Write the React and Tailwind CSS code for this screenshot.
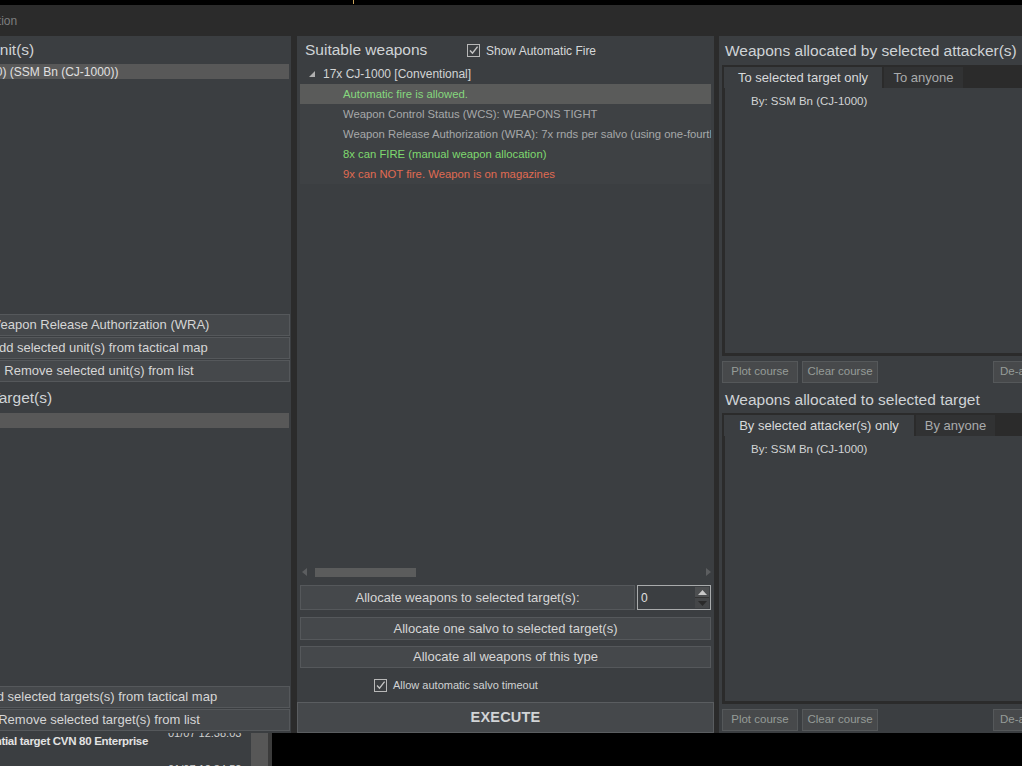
import React from 'react'

const font = "font-['Liberation_Sans','Noto_Sans',sans-serif]"

function Check({ small }) {
  return (
    <span className="w-[13px] h-[13px] border border-[#b8b8b8] bg-[#3b3e41] flex items-center justify-center shrink-0">
      <svg width="11" height="11" viewBox="0 0 11 11">
        <path d="M2 5.5 L4.5 8.2 L9.6 1.6" fill="none" stroke="#c4c4c4" strokeWidth={small ? 1.3 : 1.5} />
      </svg>
    </span>
  )
}

function Btn({ children, className = '' }) {
  return (
    <div className={`flex items-center justify-center bg-[#45484b] border border-[#55585b] text-[#d6d6d6] text-[13px] whitespace-nowrap shrink-0 ${className}`}>
      {children}
    </div>
  )
}

function SmallBtn({ children, className = '' }) {
  return (
    <div className={`h-[22px] flex items-center justify-center bg-[#47494b] border border-[#55585a] text-[#969c98] text-[11.5px] whitespace-nowrap ${className}`}>
      {children}
    </div>
  )
}

function TabBox({ tabs }) {
  return (
    <div className="flex-1 flex flex-col ml-[3px]">
      <div className="h-[23px] bg-[#2b2b2b] flex items-end pl-[2px] gap-[2px]">
        <div className={`h-[21px] ${tabs[0].w} bg-[#3b3e41] flex items-center justify-center text-[13px] text-[#d8dadb]`}>{tabs[0].label}</div>
        <div className={`h-[21px] ${tabs[1].w} bg-[#313233] flex items-center justify-center text-[13px] text-[#a9abac]`}>{tabs[1].label}</div>
      </div>
      <div className="flex-1 bg-[#3b3e41] border-l-[3px] border-b-[3px] border-[#2b2b2b] pl-[26px] pt-[5px] text-[11.5px] text-[#d2d4d5]">
        By: SSM Bn (CJ-1000)
      </div>
    </div>
  )
}

const rows = [
  { t: 'Automatic fire is allowed.', c: 'text-[#86d77e]', sel: true },
  { t: 'Weapon Control Status (WCS): WEAPONS TIGHT', c: 'text-[#a6a8a9]' },
  { t: 'Weapon Release Authorization (WRA): 7x rnds per salvo (using one-fourth of the salvo)', c: 'text-[#a6a8a9]' },
  { t: '8x can FIRE (manual weapon allocation)', c: 'text-[#7fd86f]' },
  { t: '9x can NOT fire. Weapon is on magazines', c: 'text-[#e06b52]' },
]

export default function App() {
  return (
    <div className={`w-[1022px] h-[766px] bg-black overflow-hidden flex flex-col ${font}`}>
      <div className="h-[5px] shrink-0 bg-black relative">
        <span className="absolute left-[353px] top-0 w-[1px] h-[4px] bg-[#c9a25a]" />
      </div>
      <div className="h-[31px] shrink-0 bg-[#2b2b2b] flex items-center text-[12px] text-[#7d7e7f] overflow-hidden">
        <span className="ml-[-82px] whitespace-nowrap">Weapon Allocation</span>
      </div>

      <div className="h-[697px] shrink-0 flex bg-[#2b2b2b]">
        {/* left panel */}
        <div className="w-[291px] overflow-hidden bg-[#3b3e41]">
          <div className="w-[383px] ml-[-92px] h-full flex flex-col">
            <div className="h-[28px] flex items-center text-[15.5px] text-[#cfd3d6] whitespace-nowrap pl-[22px]">Attacker unit(s)</div>
            <div className="h-[15px] bg-[#585858] text-[12px] text-[#e0e0e0] flex items-center whitespace-nowrap mr-[2px] overflow-hidden">
              <span className="ml-[-24px]">SSM Bn #1 (Unit 1190) (SSM Bn (CJ-1000))</span>
            </div>
            <div className="h-[235px]" />
            <div className="flex flex-col gap-[1px] pr-[1px]">
              <Btn className="h-[22px]">Weapon Release Authorization (WRA)</Btn>
              <Btn className="h-[22px]">Add selected unit(s) from tactical map</Btn>
              <Btn className="h-[22px]">Remove selected unit(s) from list</Btn>
            </div>
            <div className="h-[31px] flex items-center text-[15.5px] text-[#cfd3d6] whitespace-nowrap pl-[83px]">Target(s)</div>
            <div className="h-[15px] bg-[#585858] mr-[2px]" />
            <div className="flex-1" />
            <div className="flex flex-col gap-[1px] pr-[1px] pb-[2px]">
              <Btn className="h-[22px]">Add selected targets(s) from tactical map</Btn>
              <Btn className="h-[22px]">Remove selected target(s) from list</Btn>
            </div>
          </div>
        </div>

        <div className="w-[6px]" />

        {/* middle panel */}
        <div className="w-[417px] bg-[#3b3e41] flex flex-col">
          <div className="h-[28px] flex items-center pl-[8px]">
            <span className="text-[15.5px] text-[#cfd3d6] w-[162px]">Suitable weapons</span>
            <Check />
            <span className="ml-[6px] text-[12px] text-[#d6d8d9] mt-[2px]">Show Automatic Fire</span>
          </div>
          <div className="mx-[3px] overflow-hidden">
            <div className="h-[20px] flex items-center text-[12px] text-[#d2d4d5]">
              <svg width="6" height="6" viewBox="0 0 6 6" className="ml-[9px] mr-[8px]"><path d="M6 0 L6 6 L0 6 Z" fill="#b0b0b0" /></svg>
              17x CJ-1000 [Conventional]
            </div>
            {rows.map((r, i) => (
              <div key={i} className={`h-[20px] flex items-center whitespace-nowrap pl-[43px] text-[11.3px] pt-[1px] ${r.c} ${r.sel ? 'bg-[#5a5b5a]' : 'bg-[#3e4144]'}`}>{r.t}</div>
            ))}
          </div>
          <div className="flex-1" />
          <div className="h-[12px] mx-[3px] flex items-center shrink-0">
            <svg width="5" height="8" viewBox="0 0 5 8" className="ml-[2px]"><path d="M5 0 L0 4 L5 8 Z" fill="#5c5e60" /></svg>
            <div className="ml-[8px] w-[101px] h-[9px] bg-[#5b5c5c]" />
            <div className="flex-1" />
            <svg width="5" height="8" viewBox="0 0 5 8"><path d="M0 0 L5 4 L0 8 Z" fill="#5c5e60" /></svg>
          </div>
          <div className="h-[7px] shrink-0" />
          <div className="flex mx-[3px] gap-[2px] h-[25px] shrink-0">
            <Btn className="w-[335px] h-[25px]">Allocate weapons to selected target(s):</Btn>
            <div className="flex-1 border border-[#a9abac] bg-[#3b3e41] flex items-stretch">
              <span className="flex-1 text-[12px] text-[#e0e0e0] pl-[3px] flex items-center">0</span>
              <div className="w-[14px] flex flex-col py-[1px] mr-[1px]">
                <div className="flex-1 bg-[#4d4f51] flex items-center justify-center border-b border-[#333]">
                  <svg width="9" height="5" viewBox="0 0 9 5"><path d="M0 5 L4.5 0 L9 5 Z" fill="#c8c8c8" /></svg>
                </div>
                <div className="flex-1 bg-[#444648] flex items-center justify-center">
                  <svg width="9" height="5" viewBox="0 0 9 5"><path d="M0 0 L4.5 5 L9 0 Z" fill="#2a2a2a" /></svg>
                </div>
              </div>
            </div>
          </div>
          <Btn className="h-[23px] mx-[3px] mt-[7px]">Allocate one salvo to selected target(s)</Btn>
          <Btn className="h-[22px] mx-[3px] mt-[6px]">Allocate all weapons of this type</Btn>
          <div className="h-[34px] shrink-0 flex items-center pl-[77px]">
            <Check small />
            <span className="ml-[6px] text-[11px] text-[#d0d2d3] mt-[1px]">Allow automatic salvo timeout</span>
          </div>
          <div className="h-[31px] shrink-0 bg-[#45484b] border border-[#5a5d60] flex items-center justify-center text-[14.5px] font-bold text-[#d2d4d6] tracking-[0.2px]">
            EXECUTE
          </div>
        </div>

        <div className="w-[5px]" />

        {/* right panel */}
        <div className="flex-1 bg-[#3b3e41] flex flex-col overflow-hidden">
          <div className="h-[29px] shrink-0 flex items-center pl-[6px] text-[15.5px] text-[#cfd3d6] whitespace-nowrap">Weapons allocated by selected attacker(s)</div>
          <TabBox tabs={[{ label: 'To selected target only', w: 'w-[158px]' }, { label: 'To anyone', w: 'w-[79px]' }]} />
          <div className="h-[30px] shrink-0 flex items-center pl-[3px] gap-[4px] pt-[2px]">
            <SmallBtn className="w-[76px]">Plot course</SmallBtn>
            <SmallBtn className="w-[76px]">Clear course</SmallBtn>
            <div className="flex-1" />
            <SmallBtn className="w-[80px] justify-start pl-[6px] mr-[-51px]">De-allocate</SmallBtn>
          </div>
          <div className="h-[27px] shrink-0 flex items-center pl-[6px] text-[15.5px] text-[#cfd3d6] whitespace-nowrap">Weapons allocated to selected target</div>
          <TabBox tabs={[{ label: 'By selected attacker(s) only', w: 'w-[190px]' }, { label: 'By anyone', w: 'w-[79px]' }]} />
          <div className="h-[29px] shrink-0 flex items-center pl-[3px] gap-[4px] pt-[2px]">
            <SmallBtn className="w-[76px]">Plot course</SmallBtn>
            <SmallBtn className="w-[76px]">Clear course</SmallBtn>
            <div className="flex-1" />
            <SmallBtn className="w-[80px] justify-start pl-[6px] mr-[-51px]">De-allocate</SmallBtn>
          </div>
        </div>
      </div>

      {/* below the window */}
      <div className="h-[33px] shrink-0 flex overflow-hidden">
        <div className="w-[251px] bg-[#3b3e41] overflow-hidden">
          <div className="flex mt-[-7px] text-[11px] text-[#e2e2e2] whitespace-nowrap">
            <span className="ml-[-29px] mt-[7px] text-[11.5px] font-bold tracking-[-0.3px] w-[197px]">Potential target CVN 80 Enterprise</span>
            <div className="flex flex-col text-[#cfcfcf] leading-[14px]">
              <span>01/07 12:38:03</span>
              <span className="mt-[22px]">01/07 12:34:52</span>
            </div>
          </div>
        </div>
        <div className="w-[17px] bg-[#575757]" />
        <div className="w-[4px] bg-[#3b3b3b]" />
        <div className="flex-1 bg-black" />
      </div>
    </div>
  )
}
